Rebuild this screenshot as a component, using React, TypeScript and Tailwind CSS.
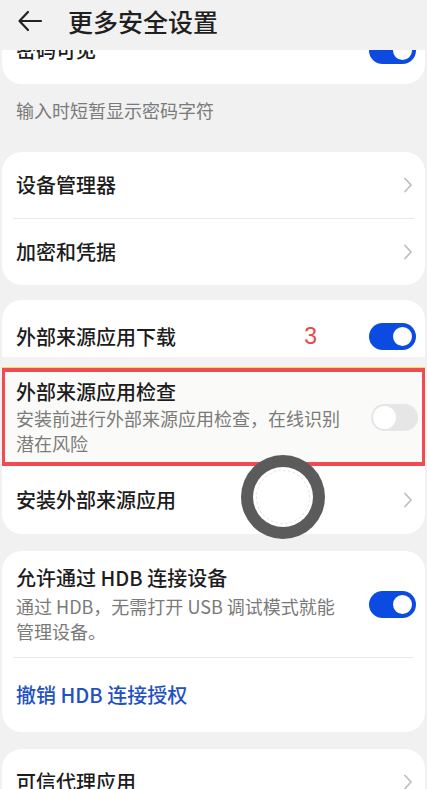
const font = { fontFamily: '"Noto Sans CJK SC", "Noto Sans", sans-serif' };

const Toggle = ({ on }: { on: boolean }) => {
	return on ? (
		<div className="w-[47px] h-[27px] rounded-full bg-[#0b4be2] flex items-center justify-end pr-[2px] shrink-0">
			<div className="w-[23px] h-[23px] rounded-full bg-white border-2 border-[#0b4be2]"></div>
		</div>
	) : (
		<div className="w-[47px] h-[27px] rounded-full bg-[#e6e6e6] flex items-center justify-start pl-[2px] shrink-0">
			<div className="w-[23px] h-[23px] rounded-full bg-white"></div>
		</div>
	);
};

const Chevron = () => (
	<svg width="10" height="16" viewBox="0 0 10 16" className="shrink-0">
		<path d="M2 1.5 L8 8 L2 14.5" fill="none" stroke="#bfbfbf" strokeWidth="1.8" strokeLinecap="round" strokeLinejoin="round" />
	</svg>
);

const Divider = () => <div className="mx-[11px] h-px bg-[#e9e9e9]"></div>;

const LinkRow = ({ title }: { title: string }) => (
	<div className="h-[66px] flex items-center justify-between pl-[14px] pr-[12px]">
		<p className="text-[20px] font-medium text-[#1c1c1c]">{title}</p>
		<Chevron />
	</div>
);

export default function App() {
	return (
		<div className="relative w-[427px] h-[789px] overflow-hidden bg-[#f1f1f1]" style={font}>
			{/* header */}
			<div className="h-[50px] flex items-start pt-[7px] pl-[17px] gap-[25px]">
				<svg width="26" height="28" viewBox="0 0 26 28">
					<path d="M24 14 H3 M11 5 L2.5 14 L11 23" fill="none" stroke="#222" strokeWidth="2.2" strokeLinecap="round" strokeLinejoin="round" />
				</svg>
				<h1 className="text-[25px] leading-[28px] font-medium text-[#1f1f1f]">更多安全设置</h1>
			</div>

			{/* clipped card */}
			<div className="mx-[2px] h-[34px] overflow-hidden bg-white rounded-b-[20px]">
				<div className="-mt-[33px] h-[66px] flex items-center justify-between pl-[14px] pr-[9px]">
					<p className="text-[20px] font-medium text-[#1c1c1c]">密码可见</p>
					<Toggle on={true} />
				</div>
			</div>

			<p className="mt-[14px] pl-[16px] text-[18px] leading-[24px] text-[#7a7a7a]">输入时短暂显示密码字符</p>

			{/* card 2 */}
			<div className="mt-[30px] mx-[2px] bg-white rounded-[20px]">
				<LinkRow title="设备管理器" />
				<Divider />
				<LinkRow title="加密和凭据" />
			</div>

			{/* card 3 */}
			<div className="mt-[15px] mx-[2px] bg-white rounded-[20px] overflow-hidden">
				<div className="h-[57px] flex items-center justify-between pt-[16px] pl-[14px] pr-[9px]">
					<p className="text-[20px] font-medium text-[#1c1c1c]">外部来源应用下载</p>
					<div className="flex items-center gap-[52px]">
						<span className="text-[23px] text-[#e84848]" style={{ fontFamily: '"Liberation Sans", sans-serif' }}>3</span>
						<Toggle on={true} />
					</div>
				</div>
				<div className="h-[10px] bg-[#f3f3f3]"></div>
				<div className="h-px bg-[#f5d86a]"></div>
				<div className="-ml-[1px] -mr-[1px] border-[4px] border-[#f04b50] bg-[#fafbf8] h-[98px] flex items-center justify-between pl-[11px] pr-[4px]">
					<div className="flex flex-col">
						<p className="text-[20px] leading-[26px] font-medium text-[#1c1c1c]">外部来源应用检查</p>
						<p className="text-[18px] leading-[25px] text-[#7a7a7a] mt-[1px]">
							<span className="block">安装前进行外部来源应用检查，在线识别</span>
							<span className="block">潜在风险</span>
						</p>
					</div>
					<Toggle on={false} />
				</div>
				<div className="h-[68px] flex items-center justify-between pl-[14px] pr-[12px]">
					<p className="text-[20px] font-medium text-[#1c1c1c]">安装外部来源应用</p>
					<Chevron />
				</div>
			</div>

			{/* card 4 */}
			<div className="mt-[17px] mx-[2px] bg-white rounded-[20px]">
				<div className="h-[106px] flex items-center justify-between pl-[14px] pr-[9px]">
					<div className="flex flex-col">
						<p className="text-[20px] leading-[28px] font-medium text-[#1c1c1c]">允许通过 HDB 连接设备</p>
						<p className="text-[18px] leading-[25px] text-[#7a7a7a] mt-[2px]">
							<span className="block">通过 HDB，无需打开 USB 调试模式就能</span>
							<span className="block">管理设备。</span>
						</p>
					</div>
					<Toggle on={true} />
				</div>
				<Divider />
				<div className="h-[74px] flex items-center pl-[14px]">
					<p className="text-[20px] font-medium text-[#2350c2]">撤销 HDB 连接授权</p>
				</div>
			</div>

			{/* card 5 */}
			<div className="mt-[17px] mx-[2px] bg-white rounded-[20px]">
				<LinkRow title="可信代理应用" />
			</div>

			{/* touch indicator */}
			<div className="absolute left-[241px] top-[455px] w-[84px] h-[84px] rounded-full bg-[#5b5b5b] flex items-center justify-center">
				<div className="w-[60px] h-[60px] rounded-full bg-white flex items-center justify-center">
					<div className="w-[54px] h-[54px] rounded-full border border-dashed border-[#e2e2e2]"></div>
				</div>
			</div>
		</div>
	);
}
